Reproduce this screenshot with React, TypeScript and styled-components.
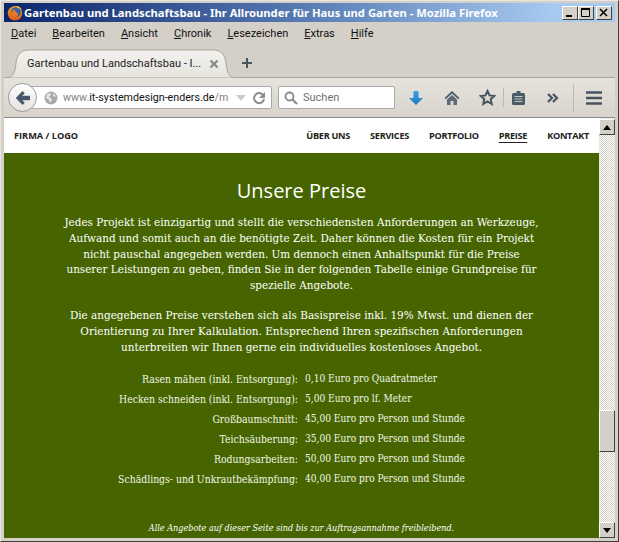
import React from "react";
import styled, { createGlobalStyle } from "styled-components";

const GlobalStyle = createGlobalStyle`
    html, body {
        margin: 0;
        padding: 0;
        height: 100%;
        overflow: hidden;
        background: #d4d0c8;
    }
    #root {
        height: 100%;
    }
`;

const Window = styled.div`
    width: 619px;
    height: 542px;
    box-sizing: border-box;
    display: flex;
    flex-direction: column;
    padding: 3px;
    background: #d4d0c8;
    border-top: 1px solid #e8e6e0;
    border-right: 1px solid #404040;
    border-bottom: 1px solid #404040;
    border-left: 1px solid #e8e6e0;
    font-family: "Noto Sans", sans-serif;
    overflow: hidden;
`;

const TitleBar = styled.div`
    height: 19px;
    margin-top: -1px;
    display: flex;
    align-items: center;
    gap: 1px;
    padding: 0 3px 0 3px;
    box-sizing: border-box;
    flex-shrink: 0;
    background: linear-gradient(90deg, #0a246a 0%, #5a7db5 50%, #a6caf0 90%);
`;

const TitleText = styled.span`
    flex: 1;
    color: #fff;
    font-size: 11.25px;
    font-weight: 700;
    white-space: nowrap;
`;

const WinButtons = styled.div`
    display: flex;
`;

const WinButton = styled.div<{ $gap?: boolean }>`
    width: 16px;
    height: 14px;
    box-sizing: border-box;
    margin-left: ${(props) => (props.$gap ? "2px" : "0")};
    background: #d4d0c8;
    border-top: 1px solid #fff;
    border-left: 1px solid #fff;
    border-right: 1px solid #404040;
    border-bottom: 1px solid #404040;
    display: flex;
    align-items: center;
    justify-content: center;
`;

const MenuBar = styled.div`
    height: 25px;
    display: flex;
    align-items: center;
    gap: 16px;
    padding: 0 0 2px 7px;
    flex-shrink: 0;
    box-sizing: border-box;
`;

const MenuItem = styled.span`
    font-family: Roboto, sans-serif;
    font-size: 11px;
    color: #111;
    u {
        text-underline-offset: 1px;
    }
`;

const TabStrip = styled.div`
    height: 31px;
    display: flex;
    align-items: flex-end;
    flex-shrink: 0;
    padding-left: 1px;
    border-bottom: 1px solid #a8a49c;
    box-sizing: border-box;
`;

const Tab = styled.div`
    position: relative;
    width: 232px;
    height: 29px;
    margin-bottom: -1px;
    display: flex;
    align-items: center;
    padding: 0 18px 0 22px;
    box-sizing: border-box;
    gap: 8px;
    flex-shrink: 0;
`;

const TabShape = styled.svg`
    position: absolute;
    left: 0;
    top: 0;
`;

const TabLabel = styled.span`
    position: relative;
    flex: 1;
    font-family: Roboto, sans-serif;
    font-size: 11px;
    color: #222;
    white-space: nowrap;
`;

const TabClose = styled.svg`
    position: relative;
    flex-shrink: 0;
`;

const NewTab = styled.svg`
    margin: 0 0 7px 3px;
`;

const Toolbar = styled.div`
    height: 40px;
    flex-shrink: 0;
    display: flex;
    align-items: center;
    box-sizing: border-box;
    padding: 0 0 0 4px;
    background: linear-gradient(180deg, #e6e3dd, #d8d4cc);
    border-bottom: 1px solid #8c8c8c;
`;

const BackButton = styled.div`
    width: 29px;
    height: 29px;
    box-sizing: border-box;
    border-radius: 50%;
    border: 1px solid #9a9a9a;
    background: linear-gradient(180deg, #ffffff, #e4e2de);
    display: flex;
    align-items: center;
    justify-content: center;
    margin-right: -8px;
    position: relative;
    flex-shrink: 0;
`;

const UrlBar = styled.div`
    width: 243px;
    height: 23px;
    box-sizing: border-box;
    border: 1px solid #a9a9a9;
    border-radius: 2px;
    background: #fff;
    display: flex;
    align-items: center;
    padding: 0 3px 0 14px;
    flex-shrink: 0;
    font-family: Roboto, sans-serif;
    font-size: 10.7px;
    color: #808080;
`;

const UrlText = styled.span`
    flex: 1;
    min-width: 0;
    margin-left: 5px;
    white-space: nowrap;
    b {
        font-weight: 400;
        color: #111;
    }
`;

const SearchBox = styled.div`
    width: 117px;
    height: 23px;
    box-sizing: border-box;
    margin-left: 6px;
    border: 1px solid #a9a9a9;
    border-radius: 2px;
    background: #fff;
    display: flex;
    align-items: center;
    gap: 5px;
    padding-left: 5px;
    font-family: Roboto, sans-serif;
    font-size: 11px;
    color: #707070;
    flex-shrink: 0;
`;

const ToolIcons = styled.div`
    flex: 1;
    display: flex;
    align-items: center;
    height: 100%;
`;

const ToolIcon = styled.div<{ $w: number; $pad?: number }>`
    width: ${(props) => props.$w}px;
    box-sizing: border-box;
    padding-left: ${(props) => props.$pad ?? 0}px;
    display: flex;
    align-items: center;
    justify-content: center;
    flex-shrink: 0;
`;

const ToolSep = styled.div<{ $h: number }>`
    width: 1px;
    height: ${(props) => props.$h}px;
    background: #bdb9b1;
    flex-shrink: 0;
`;

const Viewport = styled.div`
    flex: 1;
    min-height: 0;
    display: flex;
`;

const Page = styled.div`
    flex: 1;
    min-width: 0;
    display: flex;
    flex-direction: column;
    background: #466500;
`;

const Nav = styled.nav`
    height: 35px;
    flex-shrink: 0;
    background: #fff;
    display: flex;
    align-items: center;
    justify-content: space-between;
    padding: 0 10px;
    font-family: "Open Sans", "Noto Sans", sans-serif;
    font-size: 9.2px;
    font-weight: 700;
    color: #222;
`;

const NavLinks = styled.div`
    display: flex;
    gap: 20px;
`;

const NavLink = styled.span<{ $active?: boolean }>`
    letter-spacing: -0.3px;
    text-decoration: ${(props) => (props.$active ? "underline" : "none")};
    text-underline-offset: 3px;
`;

const Content = styled.main`
    flex: 1;
    min-height: 0;
    display: flex;
    flex-direction: column;
    align-items: center;
    color: #fff;
    padding-top: 26px;
    font-family: "DejaVu Serif", serif;
    font-stretch: condensed;
    text-align: center;
`;

const Heading = styled.h1`
    margin: 0 0 12px;
    font-family: "Open Sans", "Noto Sans", sans-serif;
    font-stretch: normal;
    font-size: 20px;
    line-height: 24px;
    font-weight: 400;
`;

const Paragraph = styled.p`
    margin: 0 0 14px;
    width: 478px;
    font-size: 11.6px;
    line-height: 15.8px;
`;

const PriceGrid = styled.div`
    width: 100%;
    display: grid;
    grid-template-columns: 294px 1fr;
    column-gap: 7px;
    font-size: 10.35px;
    color: #f2f5e6;
`;

const PriceLabel = styled.div`
    text-align: right;
    line-height: 20px;
`;

const PriceValue = styled.div`
    text-align: left;
    font-size: 10.1px;
    line-height: 20px;
`;

const Note = styled.em`
    margin-top: 32px;
    font-size: 9px;
    line-height: 14px;
`;

const Scrollbar = styled.div`
    width: 16px;
    flex-shrink: 0;
    display: flex;
    flex-direction: column;
    background: repeating-conic-gradient(#d4d0c8 0% 25%, #fff 0% 50%) 0 0 / 2px 2px;
`;

const ScrollButton = styled.div<{ $top?: boolean }>`
    height: 16px;
    margin-top: ${(props) => (props.$top ? "1px" : "0")};
    flex-shrink: 0;
    box-sizing: border-box;
    background: #d4d0c8;
    border-top: 1px solid #fff;
    border-left: 1px solid #fff;
    border-right: 1px solid #404040;
    border-bottom: 1px solid #404040;
    display: flex;
    align-items: center;
    justify-content: center;
`;

const ScrollTrack = styled.div`
    flex: 1;
    padding-top: 275px;
`;

const ScrollThumb = styled.div`
    height: 42px;
    box-sizing: border-box;
    background: #d4d0c8;
    border-top: 1px solid #fff;
    border-left: 1px solid #fff;
    border-right: 1px solid #404040;
    border-bottom: 1px solid #404040;
`;

const prices = [
    ["Rasen mähen (inkl. Entsorgung):", "0,10 Euro pro Quadratmeter"],
    ["Hecken schneiden (inkl. Entsorgung):", "5,00 Euro pro lf. Meter"],
    ["Großbaumschnitt:", "45,00 Euro pro Person und Stunde"],
    ["Teichsäuberung:", "35,00 Euro pro Person und Stunde"],
    ["Rodungsarbeiten:", "50,00 Euro pro Person und Stunde"],
    ["Schädlings- und Unkrautbekämpfung:", "40,00 Euro pro Person und Stunde"],
];

const menu = [
    ["D", "atei"],
    ["B", "earbeiten"],
    ["A", "nsicht"],
    ["C", "hronik"],
    ["L", "esezeichen"],
    ["E", "xtras"],
    ["H", "ilfe"],
];

const FirefoxLogo = () => (
    <svg width="16" height="16" viewBox="0 0 16 16">
        <defs>
            <linearGradient id="foxFill" x1="0" y1="0" x2="0" y2="1">
                <stop offset="0" stopColor="#f0a020" />
                <stop offset="1" stopColor="#e2541a" />
            </linearGradient>
        </defs>
        <circle cx="8" cy="8.300" r="7.300" fill="url(#foxFill)" />
        <circle cx="9" cy="7" r="4.800" fill="#2f62ae" />
        <path d="M4.500 8C5 5.500 7 4.200 8.500 4.500 7.800 5.500 8 6.500 9.500 7.200 11.500 8.200 11.500 11 9 11.800 6.500 12.500 4.200 10.800 4.500 8z" fill="#ec7a1e" />
        <path d="M9 1C11.500 1 14 2.500 15 5 13.500 3.500 12 3 10.500 3.200 10 2.500 9.500 1.700 9 1z" fill="#f6c52e" />
    </svg>
);

const App = () => {
    return (
        <Window>
            <GlobalStyle />
            <TitleBar>
                <FirefoxLogo />
                <TitleText>
                    Gartenbau und Landschaftsbau - Ihr Allrounder für Haus und Garten - Mozilla Firefox
                </TitleText>
                <WinButtons>
                    <WinButton>
                        <svg width="10" height="10" viewBox="0 0 10 10">
                            <rect x="1" y="7" width="6" height="2" fill="#000" />
                        </svg>
                    </WinButton>
                    <WinButton>
                        <svg width="10" height="10" viewBox="0 0 10 10">
                            <path d="M.5 1.500h8v7h-8z" fill="none" stroke="#000" />
                            <rect x="0" y="0" width="9" height="2" fill="#000" />
                        </svg>
                    </WinButton>
                    <WinButton $gap>
                        <svg width="10" height="10" viewBox="0 0 10 10">
                            <path d="M1 1l7 7M8 1L1 8" stroke="#000" strokeWidth="1.500" />
                        </svg>
                    </WinButton>
                </WinButtons>
            </TitleBar>
            <MenuBar>
                {menu.map(([first, rest]) => (
                    <MenuItem key={first}>
                        <u>{first}</u>
                        {rest}
                    </MenuItem>
                ))}
            </MenuBar>
            <TabStrip>
                <Tab>
                    <TabShape width="232" height="29" viewBox="0 0 232 29">
                        <defs>
                            <linearGradient id="tabFill" x1="0" y1="0" x2="0" y2="1">
                                <stop offset="0" stopColor="#f4f2ee" />
                                <stop offset="1" stopColor="#e6e3dd" />
                            </linearGradient>
                        </defs>
                        <path
                            d="M0 29C8 29 10 24 11 14 12 5 16 1 24 1H208C216 1 220 5 221 14 222 24 224 29 232 29Z"
                            fill="url(#tabFill)"
                            stroke="#a8a49c"
                        />
                    </TabShape>
                    <TabLabel>Gartenbau und Landschaftsbau - I...</TabLabel>
                    <TabClose width="10" height="10" viewBox="0 0 10 10">
                        <path d="M1.500 1.500l7 7M8.500 1.500l-7 7" stroke="#8a8a8a" strokeWidth="2.400" />
                    </TabClose>
                </Tab>
                <NewTab width="14" height="14" viewBox="0 0 14 14">
                    <path d="M7 2v10M2 7h10" stroke="#4a5560" strokeWidth="2" />
                </NewTab>
            </TabStrip>
            <Toolbar>
                <BackButton>
                    <svg width="16" height="16" viewBox="0 0 16 16">
                        <path d="M7.500 1L.8 8l6.700 7 2.300-2.200L7.200 10.200H15V5.800H7.200l2.600-2.600z" fill="#47586a" />
                    </svg>
                </BackButton>
                <UrlBar>
                    <svg width="14" height="14" viewBox="0 0 14 14">
                        <circle cx="7" cy="7" r="6.500" fill="#a8a8a8" />
                        <path d="M3 3l3-1 1 2-2 2 2 1 1 2-2 3-1-3-3-2zM9 2l3 3-1 1-2-1z" fill="#e6e6e6" />
                    </svg>
                    <UrlText>
                        www.<b>it-systemdesign-enders.de</b>/m
                    </UrlText>
                    <svg width="12" height="10" viewBox="0 0 12 10">
                        <path d="M1 2h10L6 8z" fill="#c8ccd2" />
                    </svg>
                    <svg width="18" height="14" viewBox="0 0 18 14" style={{ marginLeft: 3 }}>
                        <path d="M13 4A5 5 0 1 0 14 8" fill="none" stroke="#8a8f96" strokeWidth="2" />
                        <path d="M15 1v6H9z" fill="#8a8f96" />
                    </svg>
                </UrlBar>
                <SearchBox>
                    <svg width="14" height="14" viewBox="0 0 14 14">
                        <circle cx="5.500" cy="5.500" r="4" fill="none" stroke="#8a8a8a" strokeWidth="1.800" />
                        <path d="M8.500 8.500l4.500 4.500" stroke="#8a8a8a" strokeWidth="2.200" />
                    </svg>
                    Suchen
                </SearchBox>
                <ToolIcons>
                    <ToolIcon $w={42}>
                        <svg width="16" height="16" viewBox="0 0 16 16">
                            <defs>
                                <linearGradient id="dlFill" x1="0" y1="0" x2="0" y2="1">
                                    <stop offset="0" stopColor="#3aa0e0" />
                                    <stop offset="1" stopColor="#1f7cc0" />
                                </linearGradient>
                            </defs>
                            <path d="M5.500 1h5v7H15l-7 7-7-7h4.500z" fill="url(#dlFill)" />
                        </svg>
                    </ToolIcon>
                    <ToolIcon $w={29}>
                        <svg width="16" height="16" viewBox="0 0 16 16">
                            <path d="M8 1L.5 8l1.200 1.200L8 3.500l6.300 5.700L15.500 8z" fill="#4a5a66" />
                            <path d="M8 5L3 9.500V15h3.500v-4h3v4H13V9.500z" fill="#5d6c78" />
                        </svg>
                    </ToolIcon>
                    <ToolIcon $w={37} $pad={5}>
                        <svg width="17" height="17" viewBox="0 0 17 17">
                            <path d="M8.500 2l2 4.400 4.800.6-3.600 3.200 1 4.800-4.200-2.500-4.200 2.500 1-4.800L1.700 7l4.800-.6z" fill="none" stroke="#46545f" strokeWidth="2" />
                        </svg>
                    </ToolIcon>
                    <ToolSep $h={19} />
                    <ToolIcon $w={29}>
                        <svg width="15" height="16" viewBox="0 0 15 16">
                            <rect x="1" y="3" width="13" height="12" rx="1.500" fill="#4a5a66" />
                            <path d="M5.500 1h4v3h-4z" fill="#4a5a66" />
                            <path d="M3.500 6.500h8M3.500 9h8M3.500 11.500h8" stroke="#c4c6c4" />
                        </svg>
                    </ToolIcon>
                    <ToolIcon $w={40}>
                        <svg width="12" height="10" viewBox="0 0 12 10">
                            <path d="M1 1l4 4-4 4M6 1l4 4-4 4" fill="none" stroke="#46545f" strokeWidth="2.200" />
                        </svg>
                    </ToolIcon>
                    <ToolSep $h={28} />
                    <ToolIcon $w={40}>
                        <svg width="16" height="14" viewBox="0 0 16 14">
                            <path d="M0 1.500h16M0 7h16M0 12.500h16" stroke="#46545f" strokeWidth="2.600" />
                        </svg>
                    </ToolIcon>
                </ToolIcons>
            </Toolbar>
            <Viewport>
                <Page>
                    <Nav>
                        <span>FIRMA / LOGO</span>
                        <NavLinks>
                            <NavLink>ÜBER UNS</NavLink>
                            <NavLink>SERVICES</NavLink>
                            <NavLink>PORTFOLIO</NavLink>
                            <NavLink $active>PREISE</NavLink>
                            <NavLink>KONTAKT</NavLink>
                        </NavLinks>
                    </Nav>
                    <Content>
                        <Heading>Unsere Preise</Heading>
                        <Paragraph>
                            Jedes Projekt ist einzigartig und stellt die verschiedensten Anforderungen an Werkzeuge,
                            Aufwand und somit auch an die benötigte Zeit. Daher können die Kosten für ein Projekt
                            nicht pauschal angegeben werden. Um dennoch einen Anhaltspunkt für die Preise
                            unserer Leistungen zu geben, finden Sie in der folgenden Tabelle einige Grundpreise für
                            spezielle Angebote.
                        </Paragraph>
                        <Paragraph>
                            Die angegebenen Preise verstehen sich als Basispreise inkl. 19% Mwst. und dienen der
                            Orientierung zu Ihrer Kalkulation. Entsprechend Ihren spezifischen Anforderungen
                            unterbreiten wir Ihnen gerne ein individuelles kostenloses Angebot.
                        </Paragraph>
                        <PriceGrid>
                            {prices.map(([label, value]) => (
                                <React.Fragment key={label}>
                                    <PriceLabel>{label}</PriceLabel>
                                    <PriceValue>{value}</PriceValue>
                                </React.Fragment>
                            ))}
                        </PriceGrid>
                        <Note>Alle Angebote auf dieser Seite sind bis zur Auftragsannahme freibleibend.</Note>
                    </Content>
                </Page>
                <Scrollbar>
                    <ScrollButton $top>
                        <svg width="8" height="5" viewBox="0 0 8 5">
                            <path d="M4 0l4 5H0z" fill="#000" />
                        </svg>
                    </ScrollButton>
                    <ScrollTrack>
                        <ScrollThumb />
                    </ScrollTrack>
                    <ScrollButton>
                        <svg width="8" height="5" viewBox="0 0 8 5">
                            <path d="M4 5L0 0h8z" fill="#000" />
                        </svg>
                    </ScrollButton>
                </Scrollbar>
            </Viewport>
        </Window>
    );
};

export default App;
